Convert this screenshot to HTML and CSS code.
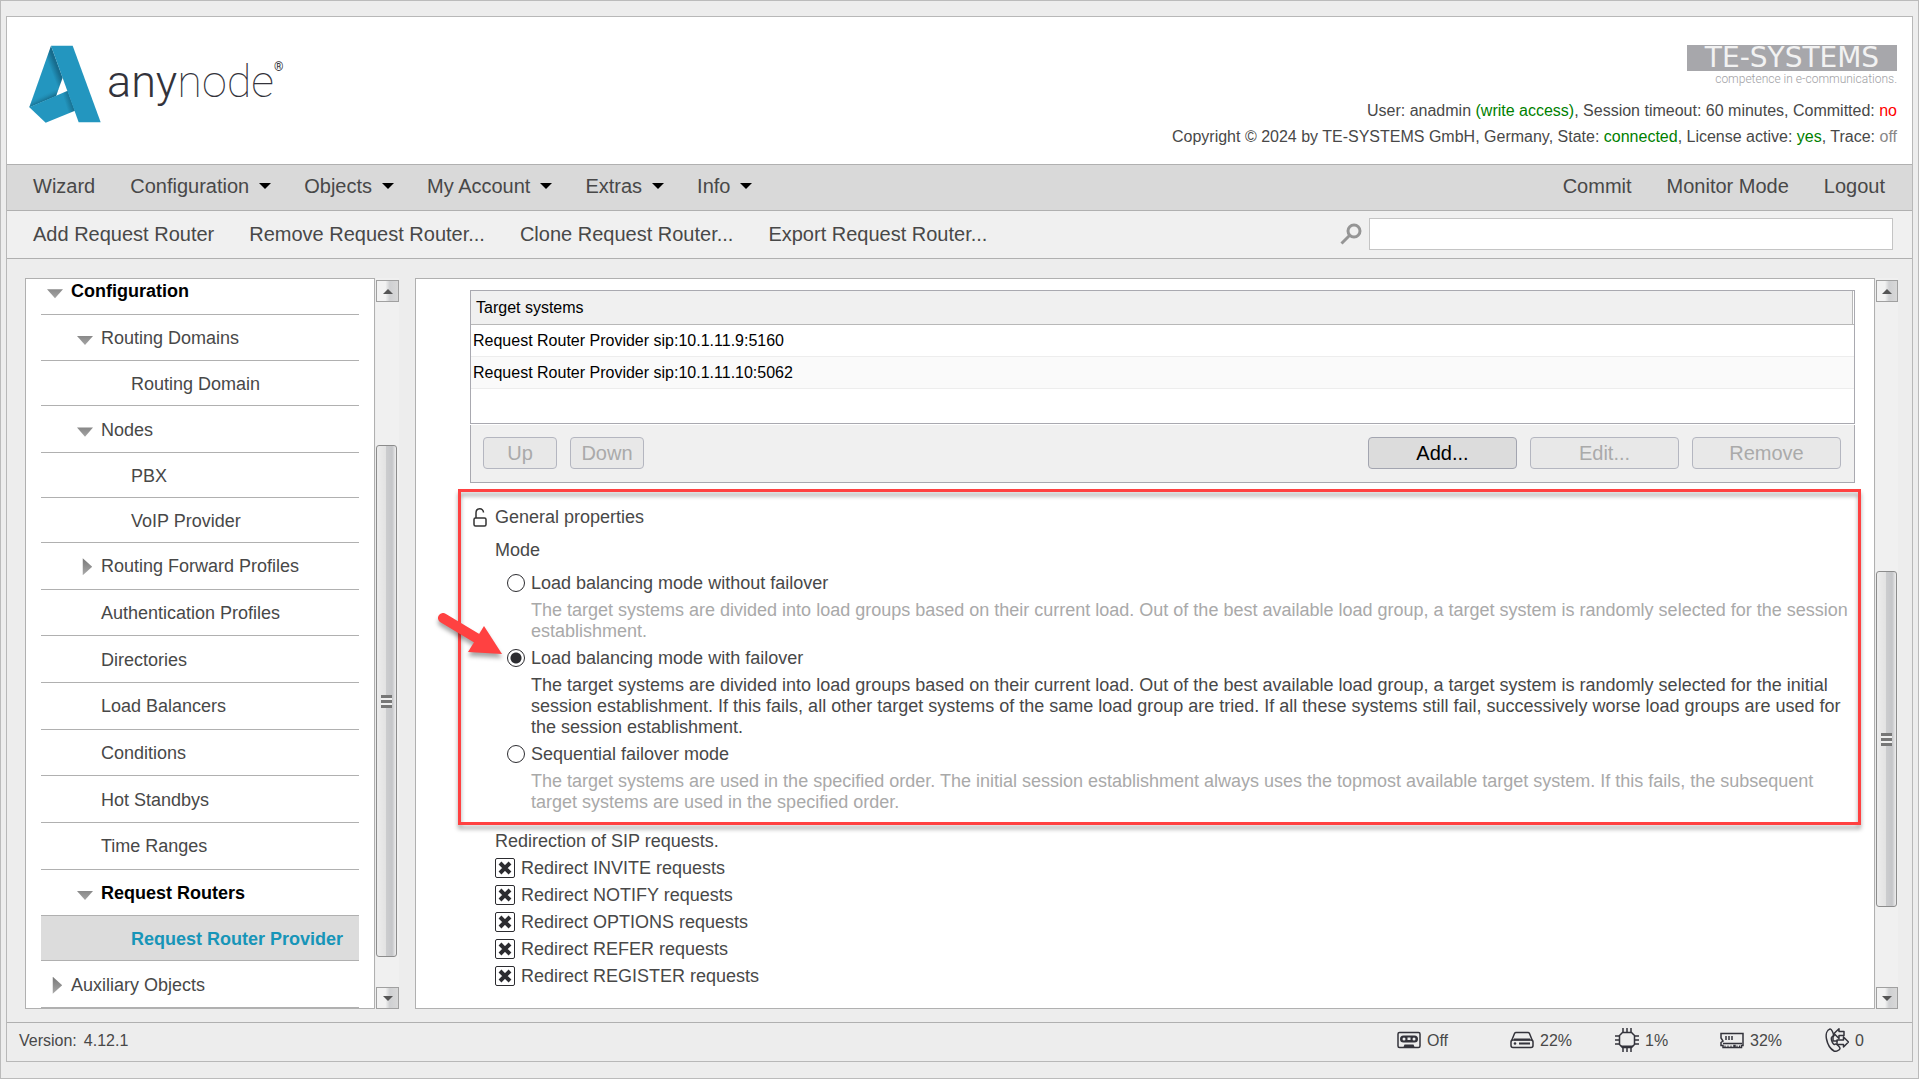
FILE: index.html
```html
<!DOCTYPE html>
<html lang="en">
<head>
<meta charset="utf-8">
<title>anynode – Request Router Provider</title>
<link rel="stylesheet" href="styles.css">
</head>
<body>
<div class="window">
<div class="frame">
  <header class="header">
    <a class="brand" href="#" aria-label="anynode home">
      <svg class="brand-mark" viewBox="87 134 216 234" aria-hidden="true">
        <defs>
          <linearGradient id="foldTop" gradientUnits="userSpaceOnUse" x1="146" y1="215" x2="172" y2="205"><stop offset=".3" stop-color="#2396bf"/><stop offset="1" stop-color="#176c8d"/></linearGradient>
          <linearGradient id="foldLow" gradientUnits="userSpaceOnUse" x1="196" y1="310" x2="222" y2="302"><stop offset="0" stop-color="#2396bf"/><stop offset="1" stop-color="#14627f"/></linearGradient>
          <linearGradient id="foldLeft" gradientUnits="userSpaceOnUse" x1="120" y1="285" x2="130" y2="306"><stop offset="0" stop-color="#2396bf" stop-opacity="0"/><stop offset="1" stop-color="#14627f"/></linearGradient>
        </defs>
        <path fill="url(#foldTop)" d="M153 136 88 321l80-34 20-55z"/>
        <path fill="url(#foldLeft)" d="M98 292 88 321l80-34 8-22z"/>
        <path fill="url(#foldLow)" d="M88 321 203 271l22 60-88 36z"/>
        <path fill="#2396bf" d="M153 136h65l84 230h-66z"/>
      </svg>
      <span class="brand-name"><span class="brand-strong">any</span>node</span><span class="brand-reg">®</span>
    </a>
    <div class="header-info">
      <div class="vendor">
        <span class="vendor-name">TE-SYSTEMS</span>
        <span class="vendor-claim">competence in e-communications.</span>
      </div>
      <p class="status">User: anadmin <span class="ok">(write access)</span>, Session timeout: 60 minutes, Committed: <span class="bad">no</span></p>
      <p class="status">Copyright © 2024 by TE-SYSTEMS GmbH, Germany, State: <span class="ok">connected</span>, License active: <span class="ok">yes</span>, Trace: <span class="off">off</span></p>
    </div>
  </header>

  <nav class="menu" aria-label="Main menu">
    <a href="#">Wizard</a>
    <a href="#" class="has-menu">Configuration</a>
    <a href="#" class="has-menu">Objects</a>
    <a href="#" class="has-menu">My Account</a>
    <a href="#" class="has-menu">Extras</a>
    <a href="#" class="has-menu">Info</a>
    <a href="#" class="push">Commit</a>
    <a href="#">Monitor Mode</a>
    <a href="#">Logout</a>
  </nav>

  <div class="toolbar">
    <a href="#">Add Request Router</a>
    <a href="#">Remove Request Router...</a>
    <a href="#">Clone Request Router...</a>
    <a href="#">Export Request Router...</a>
    <label class="search">
      <svg width="22" height="22" viewBox="0 0 22 22" fill="none" stroke="#959595" aria-hidden="true"><circle cx="14" cy="8" r="6" stroke-width="3"/><path d="M9.500 12.500 1.500 20.500" stroke-width="3"/></svg>
      <input type="text" aria-label="Search">
    </label>
  </div>

  <div class="content">
    <aside class="tree-panel">
      <ul class="tree">
        <li class="level-1 open current"><a href="#">Configuration</a></li>
        <li class="level-2 open"><a href="#">Routing Domains</a></li>
        <li class="level-3"><a href="#">Routing Domain</a></li>
        <li class="level-2 open"><a href="#">Nodes</a></li>
        <li class="level-3"><a href="#">PBX</a></li>
        <li class="level-3"><a href="#">VoIP Provider</a></li>
        <li class="level-2 closed"><a href="#">Routing Forward Profiles</a></li>
        <li class="level-2"><a href="#">Authentication Profiles</a></li>
        <li class="level-2"><a href="#">Directories</a></li>
        <li class="level-2"><a href="#">Load Balancers</a></li>
        <li class="level-2"><a href="#">Conditions</a></li>
        <li class="level-2"><a href="#">Hot Standbys</a></li>
        <li class="level-2"><a href="#">Time Ranges</a></li>
        <li class="level-2 open current"><a href="#">Request Routers</a></li>
        <li class="level-3 selected"><a href="#">Request Router Provider</a></li>
        <li class="level-1 closed"><a href="#">Auxiliary Objects</a></li>
      </ul>
    </aside>
    <div class="scrollbar scrollbar-tree">
      <button class="step up" type="button" aria-label="Scroll up"></button>
      <div class="before"></div><div class="thumb"><span class="grip"></span></div><div class="after"></div>
      <button class="step down" type="button" aria-label="Scroll down"></button>
    </div>

    <main class="main-panel">
      <div class="targets">
        <table>
          <thead><tr><th scope="col">Target systems</th></tr></thead>
          <tbody>
            <tr><td>Request Router Provider sip:10.1.11.9:5160</td></tr>
            <tr><td>Request Router Provider sip:10.1.11.10:5062</td></tr>
          </tbody>
        </table>
      </div>
      <div class="actions">
        <button class="btn small" type="button" disabled>Up</button>
        <button class="btn small" type="button" disabled>Down</button>
        <button class="btn push" type="button">Add...</button>
        <button class="btn" type="button" disabled>Edit...</button>
        <button class="btn" type="button" disabled>Remove</button>
      </div>

      <section class="general">
        <h2 class="line title">
          <svg class="lock" width="14" height="19" viewBox="0 0 14 19" fill="none" stroke="#333" stroke-width="1.500" aria-hidden="true"><rect x="1" y="10" width="12" height="8" rx="1.500"/><path d="M3 10V5c0-5.500 7.500-5.500 7.500-.500"/></svg>
          General properties
        </h2>
        <div class="line" id="mode">Mode</div>
        <div class="modes" role="radiogroup" aria-labelledby="mode">
          <label class="line"><input type="radio" name="mode">Load balancing mode without failover</label>
          <p class="muted">The target systems are divided into load groups based on their current load. Out of the best available load group, a target system is randomly selected for the session establishment.</p>
          <label class="line"><input type="radio" name="mode" checked>Load balancing mode with failover</label>
          <p>The target systems are divided into load groups based on their current load. Out of the best available load group, a target system is randomly selected for the initial session establishment. If this fails, all other target systems of the same load group are tried. If all these systems still fail, successively worse load groups are used for the session establishment.</p>
          <label class="line"><input type="radio" name="mode">Sequential failover mode</label>
          <p class="muted">The target systems are used in the specified order. The initial session establishment always uses the topmost available target system. If this fails, the subsequent target systems are used in the specified order.</p>
        </div>
        <div class="callout"></div>
        <svg class="pointer" width="70" height="50" viewBox="0 0 70 50" aria-hidden="true"><path d="M9 9 44 30" stroke="#ff4141" stroke-width="10" stroke-linecap="round"/><path d="M50 17 68 45 34 43z" fill="#ff4141"/></svg>
      </section>

      <section class="redirects">
        <div>Redirection of SIP requests.</div>
        <label><input type="checkbox" checked>Redirect INVITE requests</label>
        <label><input type="checkbox" checked>Redirect NOTIFY requests</label>
        <label><input type="checkbox" checked>Redirect OPTIONS requests</label>
        <label><input type="checkbox" checked>Redirect REFER requests</label>
        <label><input type="checkbox" checked>Redirect REGISTER requests</label>
      </section>
    </main>
    <div class="scrollbar scrollbar-main">
      <button class="step up" type="button" aria-label="Scroll up"></button>
      <div class="before"></div><div class="thumb"><span class="grip"></span></div><div class="after"></div>
      <button class="step down" type="button" aria-label="Scroll down"></button>
    </div>
  </div>

  <footer class="footer">
    <span class="version"><span>Version:</span><span>4.12.1</span></span>
    <div class="meters">
      <span class="meter">
        <svg viewBox="0 0 24 24" aria-hidden="true"><rect x="1" y="4.500" width="22" height="15" rx="1.500" fill="none" stroke="#33333b" stroke-width="1.500"/><path fill="#33333b" d="M6.500 7.500h11a3.500 3.500 0 0 1 0 7h-11a3.500 3.500 0 0 1 0-7zM6.500 19l1-2.500h9l1 2.500z"/><circle cx="7" cy="11" r="1.500" fill="#ededed"/><circle cx="17" cy="11" r="1.500" fill="#ededed"/><path fill="#ededed" d="M10.500 9.500h3v2.500h-3z"/></svg>Off</span>
      <span class="meter">
        <svg viewBox="0 0 24 24" fill="none" stroke="#33333b" stroke-width="1.500" aria-hidden="true"><rect x="1" y="12" width="22" height="7.500" rx="2"/><path d="M1.500 13 4.500 5.500Q5 4.500 6 4.500h12q1 0 1.500 1L22.500 13"/><path d="M4 11.500h16M9 15.500h11" stroke-width="2"/><circle cx="5" cy="15.500" r="1.300" fill="#33333b" stroke="none"/></svg>22%</span>
      <span class="meter">
        <svg viewBox="0 0 24 24" fill="none" stroke="#33333b" stroke-width="1.500" aria-hidden="true"><path d="M7.500 4.500h9l3 3v9l-3 3h-9l-3-3v-9z"/><path d="M8 0v4M12 0v4M16 0v4M8 20v4M12 20v4M16 20v4M0 8h4M0 12h4M0 16h4M20 8h4M20 12h4M20 16h4"/><path d="M5 17.500h14l-2.500 2.500h-9z" fill="#33333b" stroke="none"/></svg>1%</span>
      <span class="meter">
        <svg viewBox="0 0 24 24" fill="none" stroke="#33333b" stroke-width="1.500" aria-hidden="true"><path d="M1 5.500h22v12h-1.500v2h-6.500v-2h-1v2H3v-2H1v-3l2-1.500-2-3z"/><path d="M6 8v4M9 8v4M12 8v4M3 15.500h19"/><path d="M5 17.500v2M8 17.500v2M11 17.500v2M17 17.500v2M19.500 17.500v2" stroke-width="1"/></svg>32%</span>
      <span class="meter">
        <svg viewBox="0 0 24 24" fill="none" stroke="#33333b" stroke-width="1.500" stroke-linejoin="round" aria-hidden="true"><path d="M5 1C2 2 .500 6 1.500 11c1 5 4 10 7.500 12 2 1 6-1 6-2.500 0-1.500-3-4.500-4.500-4.500-1 0-1 1-2 0C7 14.500 6 11 6.500 9.500c.3-1 2-1 2-2.500C8.500 5.500 6.500.500 5 1z"/><path d="M9 5.500 14 .800V3.500h5v4h-5v3zM23.500 14l-5-5v3H12v4.500h6.500V19z"/><path d="M9.500 6.500 8 9v4h4.500"/></svg>0</span>
    </div>
  </footer>
</div>
</div>
</body>
</html>
```
FILE: styles.css
```css
* { box-sizing: border-box; }

body {
  margin: 0;
  min-height: 100vh;
  display: flex;
  background: #fff;
  color: #484848;
  font: 18px/21px "Liberation Sans", Arial, sans-serif;
}

a { color: inherit; text-decoration: none; }
p, h2, ul { margin: 0; padding: 0; font: inherit; }
button, input { font: inherit; margin: 0; }

.window {
  flex: 1;
  display: flex;
  margin: 0 1px 1px 0;
  padding: 15px 5px 16px;
  border: 1px solid #bbb;
  background: #ededed;
}
.frame {
  flex: 1;
  min-width: 0;
  display: flex;
  flex-direction: column;
  border: 1px solid #b8b8b8;
}

/* Header */
.header {
  display: flex;
  justify-content: space-between;
  height: 148px;
  padding: 28px 15px 0 22px;
  background: #fff;
  border-bottom: 1px solid #b0b0b0;
}
.brand { display: flex; align-items: flex-start; color: #33333b; }
.brand-mark { width: 72px; height: 78px; }
.brand-name {
  margin-left: 6px;
  font: 100 45px/74px Roboto, sans-serif;
}
.brand-strong { font-weight: 300; }
.brand-reg { margin-top: 14px; font: 12px/16px Roboto, sans-serif; }
.header-info { text-align: right; }
.vendor {
  display: flex;
  flex-direction: column;
  align-items: flex-end;
  height: 53px;
}
.vendor-name {
  width: 210px;
  background: #a7a7ab;
  color: #f2f2f2;
  font: 28px/26px "DejaVu Sans", sans-serif;
  text-align: center;
}
.vendor-claim {
  color: #a0a0a4;
  font: 300 12px/16px Roboto, sans-serif;
}
.status { font-size: 16px; line-height: 26px; }
.ok { color: #008000; }
.bad { color: #f00; }
.off { color: #888; }

/* Menu and toolbar */
.menu, .toolbar {
  display: flex;
  align-items: center;
  gap: 35px;
  font-size: 20px;
  line-height: 24px;
  border-bottom: 1px solid #b0b0b0;
}
.menu { height: 46px; background: #d9d9d9; padding: 0 27px 3px 26px; }
.toolbar { height: 48px; background: #f0f0f0; padding: 0 19px 2px 26px; }
.push { margin-left: auto; }
.has-menu { display: flex; align-items: center; gap: 10px; margin-right: -2px; }
.has-menu::after {
  content: "";
  border: 6px solid transparent;
  border-top-color: #000;
  border-bottom: 0;
}
.search { display: flex; align-items: center; gap: 7px; margin-left: auto; }
.search input {
  width: 524px;
  height: 32px;
  border: 1px solid #c4c4c4;
  background: #fff;
}

/* Content area */
.content {
  flex: 1;
  display: grid;
  grid-template-columns: 350px 23px minmax(0, 1fr) 22px;
  column-gap: 1px;
  padding: 19px 14px 13px 18px;
}
.tree-panel, .main-panel { border: 1px solid #b0b0b0; background: #fff; overflow: hidden; }
.tree-panel { display: flex; padding: 0 15px; }
.main-panel { margin-left: 15px; padding: 11px 19px 0 54px; }

.tree {
  flex: 1;
  display: flex;
  flex-direction: column;
  margin-top: -11px;
  list-style: none;
}
.tree li {
  flex: 1 0 45px;
  display: flex;
  align-items: center;
  gap: 8px;
  padding-top: 2px;
  border-bottom: 1px solid #b0b0b0;
}
.tree .level-1 { padding-left: 30px; }
.tree .level-2 { padding-left: 60px; }
.tree .level-3 { padding-left: 90px; flex: 0 0 45px; }
.tree .open::before, .tree .closed::before {
  content: "";
  width: 16px;
  height: 17px;
  margin-left: -24px;
  background: linear-gradient(#777, #aaa);
}
.tree .open::before { clip-path: polygon(0 35%, 100% 35%, 50% 88%); }
.tree .closed::before { clip-path: polygon(36% 0, 95% 50%, 36% 100%); }
.current { color: #000; font-weight: bold; }
.selected { background: #dcdcdc; color: #1795b8; font-weight: bold; }

/* Scrollbars */
.scrollbar {
  display: flex;
  flex-direction: column;
  padding-top: 2px;
  background: #f0f0f0;
}
.step {
  height: 22px;
  padding: 0;
  border: 1px solid #a0a0a0;
  background: linear-gradient(90deg, #f2f2f2 40%, #cfd0d2 60%, #d8d8d8);
  display: grid;
  place-items: center;
}
.step::before { content: ""; border: 5px solid transparent; }
.up::before { border-bottom-color: #555; border-top: 0; }
.down::before { border-top-color: #555; border-bottom: 0; }
.thumb {
  width: 21px;
  border: 1px solid #8c8c8c;
  border-radius: 3px;
  background: linear-gradient(90deg, #ececec, #e2e2e2 48%, #cbccce 50%, #c5c6c9 80%, #eee);
  display: grid;
  place-items: center;
}
.grip {
  width: 11px;
  height: 13px;
  background: repeating-linear-gradient(#777 0 3px, #f0f0f0 3px 5px);
}
.scrollbar-tree .before { flex: 144; }
.scrollbar-tree .thumb { flex: 513; }
.scrollbar-tree .after { flex: 30; }
.scrollbar-main .before { flex: 271; }
.scrollbar-main .thumb { flex: 336; }
.scrollbar-main .after { flex: 80; }

/* Target systems */
.targets { height: 134px; border: 1px solid #a9a9b0; color: #000; font-size: 16px; }
.targets table { width: 100%; border-collapse: collapse; }
.targets th {
  height: 33px;
  padding: 0 5px;
  border-bottom: 1px solid #b8b8b8;
  background: linear-gradient(to left, #fff 1px, #b8b8b8 1px 2px, #f0f0f0 2px);
  font-weight: normal;
  text-align: left;
}
.targets td { height: 32px; padding: 1px 2px 0; border-bottom: 1px solid #ededed; }
.targets tr:nth-child(2) td { background: #fafafa; }
.actions {
  display: flex;
  gap: 13px;
  margin-top: 1px;
  padding: 12px 13px 12px 12px;
  height: 58px;
  border: 1px solid #a9a9b0;
  border-top: 0;
  background: #f0f0f0;
}
.btn {
  width: 149px;
  height: 32px;
  padding: 0;
  border: 1px solid #a3a5b0;
  border-radius: 4px;
  background: #dcdcdc;
  color: #000;
  font-size: 20px;
  line-height: 24px;
}
.btn.small { width: 74px; }
.btn:disabled { background: #e8e8e8; color: #aaa; border-color: #b4b6c0; }

/* General properties */
.general { position: relative; padding: 18px 0 12px 25px; }
.line { display: flex; align-items: center; height: 33px; }
.title { gap: 8px; margin-left: -22px; }
.modes { padding-left: 36px; }
.modes .line { gap: 6px; margin-left: -24px; }
.muted { color: #a9a9a9; }
input[type="radio"], input[type="checkbox"] { appearance: none; flex: none; margin-bottom: 2px; }
input[type="radio"] {
  width: 18px;
  height: 18px;
  border: 1px solid #2c2c30;
  border-radius: 50%;
  background: #fff;
}
input[type="radio"]:checked { background: radial-gradient(#2c2c30 5px, #fff 6px); }
.callout {
  position: absolute;
  inset: 6px -6px 0 -12px;
  border: 3px solid #ff4141;
  filter: drop-shadow(0 4px 2px rgba(0, 0, 0, .35));
  pointer-events: none;
}
.pointer {
  position: absolute;
  left: -36px;
  top: 126px;
  overflow: visible;
  filter: drop-shadow(0 4px 2px rgba(0, 0, 0, .35));
}

/* Redirects */
.redirects { padding: 3px 0 0 25px; line-height: 27px; }
.redirects label { display: flex; align-items: center; gap: 6px; }
input[type="checkbox"] {
  width: 20px;
  height: 20px;
  border: 1px solid #2c2c30;
  border-radius: 2px;
  background: #fff;
}
input[type="checkbox"]:checked {
  background: #fff url("data:image/svg+xml,%3Csvg xmlns='http://www.w3.org/2000/svg' viewBox='0 0 18 18'%3E%3Cpath d='M4 4l10 10m0-10l-10 10' stroke='%232c2c30' stroke-width='4'/%3E%3C/svg%3E") center / 18px;
}

/* Footer */
.footer {
  display: flex;
  align-items: center;
  justify-content: space-between;
  height: 39px;
  padding: 0 47px 4px 12px;
  border-top: 1px solid #b0b0b0;
  font-size: 16px;
}
.version { display: flex; gap: 7px; }
.meters { display: grid; grid-template-columns: 113px repeat(3, 105px) 40px; }
.meter { display: flex; align-items: center; gap: 6px; }
.meter svg { width: 24px; height: 24px; }
```
